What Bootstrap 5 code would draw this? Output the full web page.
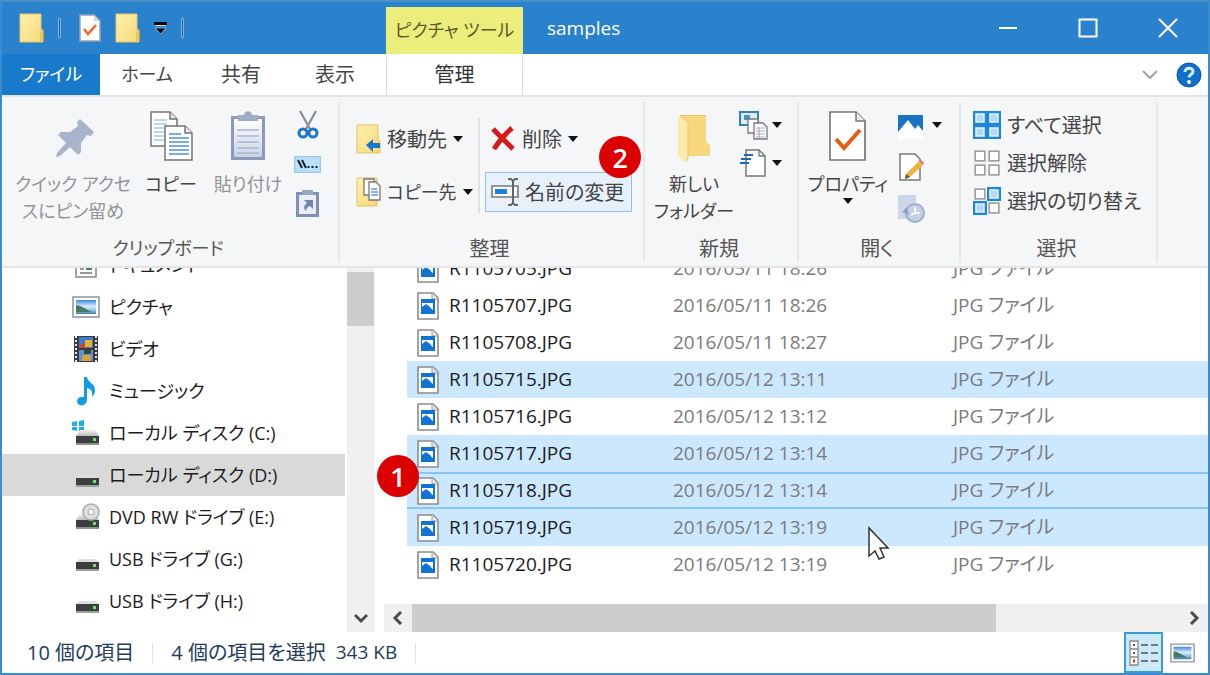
<!DOCTYPE html>
<html lang="ja">
<head>
<meta charset="utf-8">
<meta name="viewport" content="width=device-width, initial-scale=1">
<title>samples</title>
<link href="https://cdn.jsdelivr.net/npm/bootstrap@5.3.0/dist/css/bootstrap.min.css" rel="stylesheet">
<script src="https://cdn.jsdelivr.net/npm/bootstrap@5.3.0/dist/js/bootstrap.bundle.min.js"></script>
<style>
  body { font-family: "Open Sans", "Noto Sans CJK JP", sans-serif; font-size: 19px; line-height: 27px; font-feature-settings: "palt"; color: #444; }
  button { font-feature-settings: "palt"; }
  svg { display: block; flex: none; }
  .app-window { border: 2px solid #3a8ccf; border-top-color: #4a90c8; background: #fff; }

  .title-bar { background: #2a82cc; height: 52px; }
  .lead-area { width: 384px; padding-left: 17px; gap: 14px; flex: none; }
  .tool-title { width: 137px; background: #ebee7b; color: #5c5a2c; margin-top: 5px; flex: none; }
  .caption-set { gap: 60px; padding-right: 30px; }
  .qat-sep { width: 3px; height: 20px; border: 1px solid #7fb4e2; background: #22609a; }
  .plain-btn { --bs-btn-padding-x: 0; --bs-btn-padding-y: 0; --bs-btn-border-width: 0; --bs-btn-border-radius: 0; --bs-btn-disabled-opacity: 1; --bs-btn-color: #444; --bs-btn-disabled-color: #919397; --bs-btn-line-height: 27px; font-size: inherit; white-space: nowrap; }

  .tab-row { height: 43px; border-bottom: 2px solid #e3e4e6; }
  .tab-link { width: 94px; height: 41px; color: #444; text-decoration: none; display: flex; align-items: center; justify-content: center; flex: none; font-size: 20px; }
  .tab-file { width: 98px; background: #1979ca; color: #fff; }
  .tab-tool { width: 137px; border: 0 solid #ddd; border-width: 0 1px; color: #333; }
  .tab-tail { gap: 18px; padding-right: 6px; }

  .ribbon { background: #f5f6f7; border-bottom: 2px solid #e3e4e6; height: 171px; padding: 5px 0 4px; font-size: 20px; }
  .ribbon-group { border-right: 2px solid #e6e7e9; flex: none; display: flex; flex-direction: column; }
  .group-name { text-align: center; margin-top: auto; padding-right: 4px; color: #555; }
  .kana { font-size: 18px; }
  .g-clip { width: 338px; } .g-org { width: 305px; } .g-new { width: 154px; } .g-open { width: 162px; } .g-sel { width: 197px; }
  .group-body { padding-top: 8px; }
  .big-btn { display: flex; flex-direction: column; align-items: center; justify-content: flex-start; flex: none; }
  .big-btn svg { margin-bottom: 7px; }
  .w-pin { width: 126px; } .w-copy { width: 70px; } .w-paste { width: 84px; } .w-large { width: 90px; }
  .row-btn { display: flex; align-items: center; height: 38px; gap: 6px; }
  .org-col { padding-top: 10px; gap: 15px; }
  .org-left { width: 138px; }
  .org-right { padding-left: 6px; }
  .open-col { gap: 12px; }
  .caret { width: 0; height: 0; border: 5px solid transparent; border-top: 6px solid #111; border-bottom: 0; flex: none; }
  .org-divide { border-left: 2px solid #e0e1e3; height: 95px; }
  .rename-btn { background: #e8f1fb; outline: 1px solid #8fbdec; padding: 0 7px 0 5px; }
  .step-mark { position: absolute; width: 42px; height: 42px; border-radius: 50%; background: #dc0000; color: #fff; font-size: 27px; font-weight: 600; display: flex; align-items: center; justify-content: center; z-index: 2; }
  .step-rename { top: -37px; right: -10px; }
  .step-select { top: -17px; left: -30px; }

  .side-list { width: 343px; padding-bottom: 10px; flex: none; }
  .side-item { height: 42px; display: flex; align-items: center; gap: 9px; padding-left: 70px; color: #1c1c1c; text-decoration: none; flex: none; }
  .side-item.active { background: #d9d9d9; }
  .v-scroll { width: 27px; background: #f0f0f0; padding: 4px 0 8px; margin-left: 2px; flex: none; }
  .v-thumb { height: 54px; background: #cdcdcd; }
  .h-scroll { height: 28px; background: #f0f0f0; margin-left: 9px; flex: none; }
  .h-thumb { background: #cdcdcd; width: 76%; }
  .file-pane { border-left: 1px solid #f8f8f8; }
  .file-view { padding: 0 0 21px 32px; }
  .file-table { table-layout: fixed; border-collapse: separate; border-spacing: 0; width: 100%; flex: none; }
  .file-table td { height: 37px; padding: 0; color: #7b7b7b; white-space: nowrap; border: 0; vertical-align: middle; position: relative; }
  .file-table td:first-child { color: #1c1c1c; padding-left: 10px; }
  .file-table .picked td { background: #cce8ff; }
  .file-table .focused td { box-shadow: inset 0 2px #86c5f8, inset 0 -2px #86c5f8; }
  .file-label { display: flex; align-items: center; gap: 10px; }
  .col-file { width: 266px; } .col-date { width: 280px; }
  .pointer { position: absolute; left: 195px; top: 17px; z-index: 3; }

  .status-row { height: 41px; color: #243b5e; padding: 0 6px 0 25px; flex: none; font-size: 20px; }
  .status-size { font-size: 19px; margin-left: 10px; }
  .status-sep { width: 1px; height: 20px; background: #e4e4e4; margin: 0 18px; }
  .view-btn { width: 39px; height: 41px; display: flex; align-items: center; justify-content: center; }
  .view-btn.chosen { background: #cce9f8; border: 2px solid #3a9bd6; }
</style>
</head>
<body>
<svg width="0" height="0" class="position-absolute" aria-hidden="true">
  <defs>
    <linearGradient id="gf" x1="0" y1="0" x2="1" y2="1"><stop offset="0" stop-color="#fdf0b0"/><stop offset="1" stop-color="#f8d878"/></linearGradient>
    <linearGradient id="gs" x1="0" y1="0" x2="0" y2="1"><stop offset="0" stop-color="#3f87de"/><stop offset=".45" stop-color="#d7ecf8"/><stop offset=".65" stop-color="#a9d3ea"/><stop offset="1" stop-color="#3f7fae"/></linearGradient>
    <linearGradient id="gd" x1="0" y1="0" x2="0" y2="1"><stop offset="0" stop-color="#f2f2f2"/><stop offset="1" stop-color="#bcbcbc"/></linearGradient>
    <linearGradient id="gc" x1="0" y1="0" x2="0" y2="1"><stop offset="0" stop-color="#fff"/><stop offset="1" stop-color="#c9d2e4"/></linearGradient>
    <symbol id="i-folder" viewBox="0 0 25 31"><path d="M1 1h21v16h2v12H1z" fill="url(#gf)" stroke="#e9c660"/><path d="M24 17l-3 2v10h3z" fill="#f3c24f"/></symbol>
    <symbol id="i-drive" viewBox="0 0 25 28"><path d="M5 11h15l4 6H1z" fill="url(#gd)"/><rect x="1" y="17" width="23" height="7" fill="#3b403f"/><rect x="1" y="24" width="23" height="2" fill="#8b8f8e"/><rect x="18" y="19" width="3" height="3" fill="#6be46b"/></symbol>
    <symbol id="i-usb" viewBox="0 0 25 28"><path d="M4 14h17l3 4H1z" fill="#dedede"/><rect x="1" y="17" width="23" height="7" fill="#3b403f"/><rect x="1" y="24" width="23" height="2" fill="#9a9e9d"/><rect x="18" y="19" width="3" height="3" fill="#6be46b"/></symbol>
    <symbol id="i-jpg" viewBox="0 0 22 28"><path d="M1 1h15l5 5v21H1z" fill="#fff" stroke="#8c8c8c" stroke-width="1.6"/><path d="M15 1v6h6" fill="#e8e8e8" stroke="#9a9a9a"/><rect x="4" y="7" width="14" height="15" fill="#1173d3"/><path d="M5 11h11v7l-2-1-2-3-1 2-3-2-3 2z" fill="#fff"/><path d="M5 15l4-3 4 3 3 4v2H5z" fill="#1173d3"/></symbol>
    <symbol id="i-pic" viewBox="0 0 28 22"><rect x="1" y="1" width="26" height="20" fill="#fff" stroke="#8d9299" stroke-width="1.5"/><rect x="4" y="4" width="20" height="14" fill="url(#gs)"/><path d="M4 9c6 1 10 4 15 7H4z" fill="#437c63"/></symbol>
    <symbol id="i-sq" viewBox="0 0 13 13"><rect x="1" y="1" width="11" height="11" fill="#b8dcfa" stroke="#1e87d9" stroke-width="2"/><rect x="3" y="3" width="7" height="7" fill="#b4d8f8" stroke="#e2f2fe"/></symbol>
    <symbol id="i-sqo" viewBox="0 0 13 13"><rect x="2" y="2" width="9" height="9" fill="#fff" stroke="#979797" stroke-width="1.4"/></symbol>
  </defs>
</svg>

<div class="app-window vh-100 d-flex flex-column overflow-hidden">
  <header class="title-bar d-flex flex-shrink-0">
    <div class="lead-area d-flex align-items-center">
      <svg width="25" height="31" role="img" aria-label="フォルダー"><use href="#i-folder"/></svg>
      <span class="qat-sep me-1"></span>
      <button class="btn plain-btn" type="button" aria-label="プロパティ"><svg width="22" height="28" viewBox="0 0 22 28"><path d="M1 1h14l6 6v20H1z" fill="#fff" stroke="#99a4b3" stroke-width="1.5"/><path d="M15 1v6h6z" fill="#ccd3dc"/><path d="M5 15l4 5 8-9" fill="none" stroke="#e9682f" stroke-width="2.5"/></svg></button>
      <button class="btn plain-btn" type="button" aria-label="新しいフォルダー"><svg width="25" height="31"><use href="#i-folder"/></svg></button>
      <button class="btn plain-btn" type="button" aria-label="カスタマイズ"><svg width="13" height="13" viewBox="0 0 13 13"><path d="M0 1.500h13" stroke="#000" stroke-width="3"/><path d="M1 3.500h11" stroke="#c8def2"/><path d="M1 6h11l-5.500 6z" fill="#000" stroke="#b9d6ee" stroke-width=".7"/></svg></button>
      <span class="qat-sep"></span>
    </div>
    <div class="tool-title d-flex align-items-center justify-content-center kana">ピクチャ ツール</div>
    <div class="d-flex align-items-center flex-grow-1 text-white ps-4">samples</div>
    <div class="caption-set d-flex align-items-center">
      <button class="btn plain-btn" type="button" aria-label="最小化"><svg width="20" height="20" viewBox="0 0 20 20"><path d="M1 10h18" stroke="#fff" stroke-width="2"/></svg></button>
      <button class="btn plain-btn" type="button" aria-label="最大化"><svg width="20" height="20" viewBox="0 0 20 20"><rect x="1.500" y="1.500" width="17" height="17" fill="none" stroke="#fff" stroke-width="2"/></svg></button>
      <button class="btn plain-btn" type="button" aria-label="閉じる"><svg width="20" height="20" viewBox="0 0 20 20"><path d="M1 1l18 18M19 1L1 19" stroke="#fff" stroke-width="2"/></svg></button>
    </div>
  </header>

  <nav class="tab-row d-flex flex-shrink-0">
    <a class="tab-link tab-file kana" href="#">ファイル</a>
    <a class="tab-link kana" href="#">ホーム</a>
    <a class="tab-link" href="#">共有</a>
    <a class="tab-link me-1" href="#">表示</a>
    <a class="tab-link tab-tool" href="#">管理</a>
    <div class="tab-tail d-flex align-items-center ms-auto">
      <button class="btn plain-btn" type="button" aria-label="リボンの展開"><svg width="16" height="10" viewBox="0 0 16 10"><path d="M1 1l7 7 7-7" fill="none" stroke="#a3a3a3" stroke-width="2"/></svg></button>
      <button class="btn plain-btn" type="button" aria-label="ヘルプ"><svg width="26" height="26" viewBox="0 0 26 26"><circle cx="13" cy="13" r="12" fill="#0f6fcd" stroke="#0a57a8"/><path d="M9 10c0-5 8-5 8-.500 0 3-4 3-4 6" fill="none" stroke="#d8ecff" stroke-width="3"/><circle cx="13" cy="20" r="2" fill="#fff"/></svg></button>
    </div>
  </nav>

  <section class="ribbon d-flex flex-shrink-0" aria-label="リボン">
    <div class="ribbon-group g-clip">
      <div class="group-body d-flex ps-2">
        <button class="btn plain-btn big-btn kana w-pin" type="button" disabled>
          <svg width="52" height="54" viewBox="0 0 52 54"><path d="M33 9l14 13-3 4-4-1-6 8 0 9-3 3-8-8-10 9-4 1 1-4 9-10-8-8 3-3 9 0 8-6-1-4z" fill="#a9b4cc"/></svg>
          <span>クイック アクセ<br>スにピン留め</span></button>
        <button class="btn plain-btn big-btn kana w-copy" type="button">
          <svg width="46" height="54" viewBox="0 0 46 54"><g fill="#fff" stroke="#747474" stroke-width="1.500"><path d="M3 2h19l7 7v27H3z"/><path d="M22 2v7h7" fill="#ececec"/></g><path d="M6 10h13M6 14h13M6 18h11M6 22h11M6 26h11M6 30h11" stroke="#a8c8ef" stroke-width="1.500"/><g fill="#fff" stroke="#747474" stroke-width="1.500"><path d="M17 16h20l7 7v27H17z"/><path d="M37 16v7h7" fill="#ececec"/></g><path d="M21 24h12M21 28h20M21 32h20M21 36h20M21 40h20M21 44h20" stroke="#4b8ee0" stroke-width="1.600"/></svg>
          コピー</button>
        <button class="btn plain-btn big-btn kana w-paste" type="button" disabled>
          <svg width="40" height="54" viewBox="0 0 40 54"><path d="M3 6h34v44H3z" fill="#8a99be"/><path d="M6 9h28v38H6z" fill="url(#gc)"/><path d="M9 20h22M9 26h22M9 32h22M9 38h22M9 43h22" stroke="#a9b6d3" stroke-width="1.300"/><path d="M10 11V5h6c0-5 8-5 8 0h6v6z" fill="#a0abc4"/></svg>
          貼り付け</button>
        <div class="d-flex flex-column align-items-center gap-3 ps-1">
          <button class="btn plain-btn" type="button" aria-label="切り取り"><svg width="22" height="30" viewBox="0 0 22 30"><path d="M3 1l10 18M19 1L9 19" stroke="#8b8f98" stroke-width="2.300"/><circle cx="6" cy="23" r="4" fill="none" stroke="#2277c9" stroke-width="3"/><circle cx="16" cy="23" r="4" fill="none" stroke="#2277c9" stroke-width="3"/></svg></button>
          <button class="btn plain-btn" type="button" aria-label="パスのコピー"><svg width="27" height="17" viewBox="0 0 27 17"><rect x=".7" y=".7" width="25.600" height="15.600" fill="#b9e2f9" stroke="#8cbfdf"/><path d="M4 4l4 8M8 4l4 8" stroke="#123" stroke-width="2"/><path d="M13.500 11h2M17.500 11h2M21.500 11h2" stroke="#123" stroke-width="2"/></svg></button>
          <button class="btn plain-btn" type="button" aria-label="ショートカットの貼り付け" disabled><svg width="25" height="30" viewBox="0 0 25 30"><path d="M2.500 4.500h20v22h-20z" fill="#e9edf6" stroke="#7e90b8" stroke-width="3"/><path d="M7 1h11v5H7z" fill="#9ba8c4"/><path d="M9 11h9v9l-3-3c-3 1-3 2-4 5-3-3-2-6 1-8z" fill="#7186b3"/></svg></button>
        </div>
      </div>
      <div class="group-name kana">クリップボード</div>
    </div>

    <div class="ribbon-group g-org">
      <div class="group-body d-flex">
        <div class="org-col org-left d-flex flex-column ps-3">
          <button class="btn plain-btn row-btn" type="button"><svg width="25" height="30" viewBox="0 0 25 30"><path d="M1 1h21v16h2v12H1z" fill="url(#gf)" stroke="#e5c163"/><path d="M10 21l7-6v4h7v5h-7v4z" fill="#1878cd"/></svg>移動先<span class="caret"></span></button>
          <button class="btn plain-btn row-btn kana" type="button"><svg width="25" height="30" viewBox="0 0 25 30"><path d="M1 1h20v28H1z" fill="url(#gf)" stroke="#e5c163"/><g fill="#fff" stroke="#777" stroke-width="1.300"><path d="M8 2h10v16H8z"/><path d="M13 5h7l4 4v14H13z"/></g><path d="M15 12h6M15 15h7M15 18h7" stroke="#5e9be3" stroke-width="1.500"/></svg>コピー先<span class="caret"></span></button>
        </div>
        <div class="org-divide mt-2"></div>
        <div class="org-col org-right d-flex flex-column align-items-start">
          <button class="btn plain-btn row-btn ps-1" type="button"><svg width="26" height="26" viewBox="0 0 26 26"><path d="M3 3l20 20M22 2C15 8 9 15 4 23" stroke="#d61a1a" stroke-width="5" fill="none"/></svg>削除<span class="caret"></span></button>
          <div class="position-relative">
            <button class="btn plain-btn row-btn rename-btn" type="button"><svg width="28" height="28" viewBox="0 0 28 28"><path d="M1 8h26v11H1z" fill="#fff" stroke="#777" stroke-width="1.600"/><path d="M4 11h12v5H4z" fill="#1a82da"/><path d="M17 1h3l2 2 2-2h3M17 27h3l2-2 2 2h3M22 3v22" fill="none" stroke="#666" stroke-width="2"/></svg>名前の変更</button>
            <span class="step-mark step-rename">2</span>
          </div>
        </div>
      </div>
      <div class="group-name">整理</div>
    </div>

    <div class="ribbon-group g-new">
      <div class="group-body d-flex ps-1">
        <button class="btn plain-btn big-btn kana w-large" type="button">
          <svg width="36" height="54" viewBox="0 0 36 54"><path d="M4 5h26v26l4 5v10H4z" fill="#f7d77e"/><path d="M2 6l10 7v32l-3 7-7-6z" fill="#fdebab"/><path d="M4 5.500h26M12 13v34l-2 5" stroke="#edc560" fill="none"/></svg>
          <span>新しい<br>フォルダー</span></button>
        <div class="d-flex flex-column gap-2">
          <button class="btn plain-btn d-flex align-items-center gap-1" type="button" aria-label="新しいアイテム"><svg width="29" height="30" viewBox="0 0 29 30"><path d="M1 2h18v13H1z" fill="#d8eefb" stroke="#3a7fa9" stroke-width="2"/><path d="M5 5h6v5H5z" fill="#4a95c0"/><g fill="#fff" stroke="#777" stroke-width="1.300"><path d="M9 9h10v14H9z"/><path d="M15 13h9l4 4v12H15z"/></g><path d="M17 18h9M17 21h9M17 24h9M17 27h9" stroke="#8db5e0"/><path d="M20 17v11" stroke="#e08e8e"/></svg><span class="caret"></span></button>
          <button class="btn plain-btn d-flex align-items-center gap-1" type="button" aria-label="ショートカット"><svg width="29" height="30" viewBox="0 0 29 30"><path d="M7 2h13l6 6v20H7z" fill="#fff" stroke="#777" stroke-width="1.500"/><path d="M20 2v6h6" fill="none" stroke="#777" stroke-width="1.300"/><path d="M5 7h9M2 11h10M1 15h9" stroke="#1d6ab4" stroke-width="2"/></svg><span class="caret"></span></button>
        </div>
      </div>
      <div class="group-name">新規</div>
    </div>

    <div class="ribbon-group g-open">
      <div class="group-body d-flex ps-1">
        <button class="btn plain-btn big-btn kana w-large" type="button">
          <svg width="40" height="54" viewBox="0 0 40 54"><path d="M2 2h26l9 9v39H2z" fill="#fff" stroke="#777" stroke-width="1.700"/><path d="M28 2v9h9" fill="#eee" stroke="#777" stroke-width="1.500"/><path d="M8 29l8 9 16-18" fill="none" stroke="#e75b16" stroke-width="4"/></svg>
          プロパティ<span class="caret"></span></button>
        <div class="open-col d-flex flex-column align-items-start ps-1">
          <button class="btn plain-btn d-flex align-items-center gap-2" type="button" aria-label="開く"><svg width="27" height="30" viewBox="0 0 27 30"><path d="M1 5h25v24H1z" fill="#fff"/><path d="M1 5h25v16l-5-6-3 4-7-9L1 22z" fill="#1a72c7"/></svg><span class="caret"></span></button>
          <button class="btn plain-btn" type="button" aria-label="編集"><svg width="27" height="30" viewBox="0 0 27 30"><path d="M3 2h15l5 5v21H3z" fill="#fff" stroke="#777" stroke-width="1.500"/><path d="M9 22L22 9l4 4-13 12-5 2z" fill="#f0b33c"/><path d="M22 9l2-1 3 3-1 2z" fill="#d67777"/><path d="M9 22l-1 5 5-2z" fill="#555"/></svg></button>
          <button class="btn plain-btn" type="button" aria-label="履歴" disabled><svg width="28" height="30" viewBox="0 0 28 30"><path d="M1 1h18v24H1z" fill="#ccd7ea"/><circle cx="18" cy="19" r="9" fill="#c5d0e4" stroke="#a0afcd" stroke-width="2"/><path d="M18 13v6h5M14 21l4-2" stroke="#fff" stroke-width="1.600" fill="none"/><path d="M5 18l5-5 2 8z" fill="#8da0c6"/></svg></button>
        </div>
      </div>
      <div class="group-name">開く</div>
    </div>

    <div class="ribbon-group g-sel">
      <div class="d-flex flex-column ps-2 ms-1 pt-1">
        <button class="btn plain-btn row-btn" type="button"><svg width="28" height="28" viewBox="0 0 28 28"><use href="#i-sq" width="14" height="14"/><use href="#i-sq" x="14" width="14" height="14"/><use href="#i-sq" y="14" width="14" height="14"/><use href="#i-sq" x="14" y="14" width="14" height="14"/></svg>すべて選択</button>
        <button class="btn plain-btn row-btn" type="button"><svg width="28" height="28" viewBox="0 0 28 28"><use href="#i-sqo" width="14" height="14"/><use href="#i-sqo" x="14" width="14" height="14"/><use href="#i-sqo" y="14" width="14" height="14"/><use href="#i-sqo" x="14" y="14" width="14" height="14"/></svg>選択解除</button>
        <button class="btn plain-btn row-btn" type="button"><svg width="28" height="28" viewBox="0 0 28 28"><use href="#i-sqo" width="14" height="14"/><use href="#i-sq" x="14" width="14" height="14"/><use href="#i-sq" y="14" width="14" height="14"/><use href="#i-sqo" x="14" y="14" width="14" height="14"/></svg>選択の切り替え</button>
      </div>
      <div class="group-name">選択</div>
    </div>
  </section>

  <main class="d-flex flex-grow-1 overflow-hidden">
    <nav class="side-list kana d-flex flex-column justify-content-end overflow-hidden" aria-label="ナビゲーション">
      <a class="side-item" href="#"><svg width="28" height="28" viewBox="0 0 28 28"><path d="M4 2h20v24H4z" fill="#fff" stroke="#888" stroke-width="1.500"/><path d="M8 18h4M8 22h12" stroke="#777" stroke-width="1.500"/><path d="M14 16h6v3h-6z" fill="#3f7f7a"/></svg>ドキュメント</a>
      <a class="side-item" href="#"><svg width="28" height="22"><use href="#i-pic"/></svg>ピクチャ</a>
      <a class="side-item" href="#"><svg width="28" height="28" viewBox="0 0 28 28"><path d="M2 1h24v26H2z" fill="#3b3b3b"/><path d="M4 1v26M24 1v26" stroke="#e6e6e6" stroke-width="2" stroke-dasharray="2 2"/><path d="M7 2h14v11H7z" fill="#3f78c9"/><path d="M7 15h14v11H7z" fill="#5b93dd"/><path d="M13 5h7v7h-7z" fill="#e3b52e"/><path d="M8 9h5v4H8z" fill="#c8433a"/><path d="M10 20h9v6h-9z" fill="#d6a53a"/><path d="M12 15h7v4h-7z" fill="#314f35"/></svg>ビデオ</a>
      <a class="side-item" href="#"><svg width="28" height="30" viewBox="0 0 28 30"><path d="M12 1h3c1 6 8 6 8 13 0 3-1 5-3 7 1-6-1-8-5-9v12c0 4-4 6-7 5-4-1-4-7 1-8l3 0z" fill="#129be8"/></svg>ミュージック</a>
      <a class="side-item" href="#"><svg width="28" height="28" viewBox="0 0 28 28"><path d="M0 3l5-1v5H0zM7 2l5-1v6H7zM0 8h5v4l-5-1zM7 8h5v5l-5-1z" fill="#22aeea"/><use href="#i-drive" x="3" width="25" height="28"/></svg>ローカル ディスク (C:)</a>
      <a class="side-item active" href="#" aria-current="true"><svg width="28" height="28" viewBox="0 0 28 28"><use href="#i-usb" x="3" width="25" height="28"/></svg>ローカル ディスク (D:)</a>
      <a class="side-item" href="#"><svg width="28" height="28" viewBox="0 0 28 28"><use href="#i-drive" x="3" width="25" height="28"/><circle cx="19" cy="9" r="8" fill="#dedede" stroke="#aaa" stroke-width="1.500"/><circle cx="19" cy="9" r="3" fill="#fff" stroke="#aaa"/></svg>DVD RW ドライブ (E:)</a>
      <a class="side-item" href="#"><svg width="28" height="28" viewBox="0 0 28 28"><use href="#i-usb" x="3" width="25" height="28"/></svg>USB ドライブ (G:)</a>
      <a class="side-item" href="#"><svg width="28" height="28" viewBox="0 0 28 28"><use href="#i-usb" x="3" width="25" height="28"/></svg>USB ドライブ (H:)</a>
    </nav>
    <div class="v-scroll d-flex flex-column justify-content-between align-items-center" aria-hidden="true">
      <div class="v-thumb w-100"></div>
      <svg width="14" height="11" viewBox="0 0 14 11"><path d="M1 2l6 6 6-6" fill="none" stroke="#4d4d4d" stroke-width="3"/></svg>
    </div>
    <section class="file-pane flex-grow-1 d-flex flex-column overflow-hidden">
      <div class="file-view flex-grow-1 d-flex flex-column justify-content-end overflow-hidden">
        <table class="file-table">
          <colgroup><col class="col-file"><col class="col-date"><col></colgroup>
          <tbody>
            <tr><td><span class="file-label"><svg width="22" height="28"><use href="#i-jpg"/></svg>R1105705.JPG</span></td><td>2016/05/11 18:26</td><td>JPG ファイル</td></tr>
            <tr><td><span class="file-label"><svg width="22" height="28"><use href="#i-jpg"/></svg>R1105707.JPG</span></td><td>2016/05/11 18:26</td><td>JPG ファイル</td></tr>
            <tr><td><span class="file-label"><svg width="22" height="28"><use href="#i-jpg"/></svg>R1105708.JPG</span></td><td>2016/05/11 18:27</td><td>JPG ファイル</td></tr>
            <tr class="picked"><td><span class="file-label"><svg width="22" height="28"><use href="#i-jpg"/></svg>R1105715.JPG</span></td><td>2016/05/12 13:11</td><td>JPG ファイル</td></tr>
            <tr><td><span class="file-label"><svg width="22" height="28"><use href="#i-jpg"/></svg>R1105716.JPG</span></td><td>2016/05/12 13:12</td><td>JPG ファイル</td></tr>
            <tr class="picked"><td><span class="file-label"><svg width="22" height="28"><use href="#i-jpg"/></svg>R1105717.JPG</span></td><td>2016/05/12 13:14</td><td>JPG ファイル</td></tr>
            <tr class="picked focused"><td><span class="step-mark step-select">1</span><span class="file-label"><svg width="22" height="28"><use href="#i-jpg"/></svg>R1105718.JPG</span></td><td>2016/05/12 13:14</td><td>JPG ファイル</td></tr>
            <tr class="picked"><td><span class="file-label"><svg width="22" height="28"><use href="#i-jpg"/></svg>R1105719.JPG</span></td><td>2016/05/12 13:19<svg class="pointer" width="22" height="35" viewBox="0 0 22 35"><path d="M1 2v28l6-5 4 8 5-2-4-9h8z" fill="#fff" stroke="#333" stroke-width="1.500"/></svg></td><td>JPG ファイル</td></tr>
            <tr><td><span class="file-label"><svg width="22" height="28"><use href="#i-jpg"/></svg>R1105720.JPG</span></td><td>2016/05/12 13:19</td><td>JPG ファイル</td></tr>
          </tbody>
        </table>
      </div>
      <div class="h-scroll d-flex align-items-center" aria-hidden="true">
        <svg class="mx-2" width="12" height="14" viewBox="0 0 12 14"><path d="M9 1L3 7l6 6" fill="none" stroke="#4d4d4d" stroke-width="3"/></svg>
        <div class="flex-grow-1 h-100 d-flex"><div class="h-thumb"></div></div>
        <svg class="mx-2" width="12" height="14" viewBox="0 0 12 14"><path d="M3 1l6 6-6 6" fill="none" stroke="#4d4d4d" stroke-width="3"/></svg>
      </div>
    </section>
  </main>

  <footer class="status-row d-flex align-items-center">
    <span>10 個の項目</span>
    <span class="status-sep"></span>
    <span>4 個の項目を選択</span>
    <span class="status-size">343 KB</span>
    <span class="status-sep"></span>
    <div class="d-flex ms-auto">
      <button class="btn plain-btn view-btn chosen" type="button" aria-label="詳細"><svg width="30" height="26" viewBox="0 0 30 26"><g fill="#fff" stroke="#8a8a8a" stroke-width="1.300"><path d="M1 1h8v8H1zM1 9h8v8H1zM1 17h8v8H1z"/></g><path d="M4 5h2M4 13h2" stroke="#555" stroke-width="2"/><path d="M4 21h2" stroke="#d33" stroke-width="3"/><path d="M12 5h7M22 5h7M12 13h7M22 13h7M12 21h7M22 21h7" stroke="#6d7780" stroke-width="2"/></svg></button>
      <button class="btn plain-btn view-btn" type="button" aria-label="大アイコン"><svg width="25" height="20" viewBox="0 0 28 22"><use href="#i-pic"/></svg></button>
    </div>
  </footer>
</div>
</body>
</html>
